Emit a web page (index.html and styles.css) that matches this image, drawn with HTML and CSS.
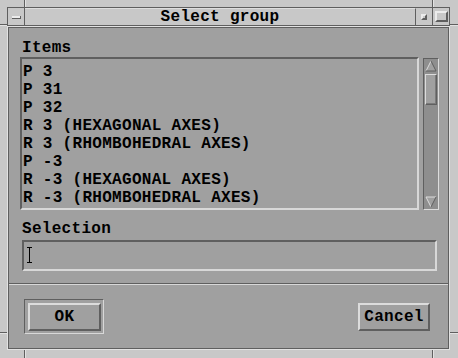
FILE: index.html
```html
<!DOCTYPE html>
<html lang="en">
  <head>
    <meta charset="UTF-8" />
    <title>Select group</title>
    <link rel="stylesheet" href="styles.css">
  </head>
  <body>
    <div class="window">
      <!-- Resize handle grooves -->
      <span class="handle h-top-left"></span>
      <span class="handle h-top-right"></span>
      <span class="handle v-top-left"></span>
      <span class="handle v-top-right"></span>
      <span class="handle h-bottom-left"></span>
      <span class="handle h-bottom-right"></span>
      <span class="handle v-bottom-left"></span>
      <span class="handle v-bottom-right"></span>

      <!-- Title bar -->
      <div class="titlebar">
        <div class="tb-btn menu-btn"><span class="menu-icon"></span></div>
        <div class="title">Select group</div>
        <div class="tb-btn min-btn"><span class="min-icon"></span></div>
        <div class="tb-btn max-btn"><span class="max-icon"></span></div>
      </div>

      <!-- Dialog body -->
      <div class="client">
        <div class="work-area">
          <div class="label">Items</div>
          <div class="list-row">
            <div class="list">
              <div class="item">P 3</div>
              <div class="item">P 31</div>
              <div class="item">P 32</div>
              <div class="item">R 3 (HEXAGONAL AXES)</div>
              <div class="item">R 3 (RHOMBOHEDRAL AXES)</div>
              <div class="item">P -3</div>
              <div class="item">R -3 (HEXAGONAL AXES)</div>
              <div class="item">R -3 (RHOMBOHEDRAL AXES)</div>
            </div>
            <div class="scrollbar">
              <svg class="arrow" width="12" height="12" viewBox="0 0 12 12">
                <polygon points="6,1 11,11 1,11" fill="#a0a0a0" />
                <polyline points="1,11 6,1" fill="none" stroke="#dcdcdc" stroke-width="1" />
                <polyline points="6,1 11,11 1,11" fill="none" stroke="#5f5f5f" stroke-width="1" />
              </svg>
              <div class="trough">
                <div class="thumb"></div>
              </div>
              <svg class="arrow" width="12" height="12" viewBox="0 0 12 12">
                <polygon points="1,1 11,1 6,11" fill="#a0a0a0" />
                <polyline points="6,11 1,1 11,1" fill="none" stroke="#dcdcdc" stroke-width="1" />
                <polyline points="11,1 6,11" fill="none" stroke="#5f5f5f" stroke-width="1" />
              </svg>
            </div>
          </div>
          <div class="label label-selection">Selection</div>
          <div class="field">
            <svg class="caret" width="5" height="16" viewBox="0 0 5 16">
              <path d="M0 0.5h5M0 15.5h5M2.5 0v16" stroke="#000" stroke-width="1" fill="none" />
            </svg>
          </div>
        </div>

        <div class="separator"></div>

        <div class="button-row">
          <div class="default-ring">
            <button class="btn" type="button">OK</button>
          </div>
          <button class="btn btn-cancel" type="button">Cancel</button>
        </div>
      </div>
    </div>
  </body>
</html>
```

FILE: styles.css
```css
/* General Styles */
body {
  margin: 0;
  padding: 0;
  font-family: "Liberation Mono", "DejaVu Sans Mono", monospace;
  font-weight: bold;
  font-size: 16px;
  letter-spacing: 0.3px;
  color: #000;
  background: #c8c8c8;
}

.window {
  position: relative;
  box-sizing: border-box;
  width: 458px;
  height: 358px;
  padding: 7px 8px 8px 7px;
  background-color: #c8c8c8;
  display: flex;
  flex-direction: column;
}

/* Resize handle grooves in the frame */
.handle {
  position: absolute;
  background-color: #5f5f5f;
}

.h-top-left,
.h-top-right,
.h-bottom-left,
.h-bottom-right {
  height: 1px;
  width: 7px;
  box-shadow: 0 1px 0 #e2e2e2;
}

.h-top-left { left: 0; top: 24px; }
.h-top-right { right: 0; top: 24px; width: 8px; }
.h-bottom-left { left: 0; top: 332px; }
.h-bottom-right { right: 0; top: 332px; width: 8px; }

.v-top-left,
.v-top-right,
.v-bottom-left,
.v-bottom-right {
  width: 1px;
  height: 7px;
  box-shadow: 1px 0 0 #e2e2e2;
}

.v-top-left { left: 24px; top: 0; }
.v-top-right { left: 432px; top: 0; }
.v-bottom-left { left: 24px; bottom: 0; height: 8px; }
.v-bottom-right { left: 432px; bottom: 0; height: 8px; }

/* Title bar */
.titlebar {
  box-sizing: border-box;
  height: 19px;
  display: flex;
  border: 1px solid #5f5f5f;
  background-color: #c8c8c8;
}

.tb-btn {
  width: 16px;
  display: flex;
  align-items: center;
  justify-content: center;
}

.menu-btn,
.min-btn {
  border-right: 1px solid #5f5f5f;
}

.title {
  flex: 1;
  text-align: center;
  line-height: 17px;
  border-right: 1px solid #5f5f5f;
  border-top: 1px solid #dedede;
  box-sizing: border-box;
}

.menu-icon {
  width: 8px;
  height: 2px;
  background-color: #ececec;
  border-right: 1px solid #5f5f5f;
  border-bottom: 1px solid #5f5f5f;
  margin-top: 2px;
}

.min-icon {
  box-sizing: border-box;
  width: 6px;
  height: 6px;
  border-top: 2px solid #ececec;
  border-left: 2px solid #ececec;
  border-right: 2px solid #5f5f5f;
  border-bottom: 2px solid #5f5f5f;
}

.max-icon {
  box-sizing: border-box;
  width: 13px;
  height: 11px;
  border-top: 2px solid #ececec;
  border-left: 2px solid #ececec;
  border-right: 2px solid #5f5f5f;
  border-bottom: 2px solid #5f5f5f;
}

/* Dialog client area */
.client {
  flex: 1;
  margin: 1px 1px 1px 1px;
  background-color: #a0a0a0;
  border: 1px solid #5f5f5f;
  box-shadow: 0 0 0 1px #e2e2e2;
  display: flex;
  flex-direction: column;
}

.work-area {
  padding: 11px 9px 0 11px;
}

.label {
  line-height: 18px;
  padding-left: 2px;
}

.label-selection {
  margin-top: 10px;
}

.list-row {
  display: flex;
  gap: 4px;
}

.list {
  flex: 1;
  height: 153px;
  box-sizing: border-box;
  padding: 4px 0 1px 1px;
  border: 2px solid;
  border-color: #5f5f5f #d8d8d8 #d8d8d8 #5f5f5f;
  line-height: 18px;
  overflow: hidden;
}

.item {
  white-space: pre;
}

.scrollbar {
  width: 16px;
  height: 152px;
  box-sizing: border-box;
  margin-top: 1px;
  border: 1px solid;
  border-color: #5f5f5f #dcdcdc #dcdcdc #5f5f5f;
  background-color: #8e8e8e;
  display: flex;
  flex-direction: column;
  align-items: center;
  padding: 1px 0;
}

.arrow {
  display: block;
  background-color: #8e8e8e;
}

.trough {
  flex: 1;
  width: 12px;
  padding-top: 2px;
}

.thumb {
  box-sizing: border-box;
  height: 31px;
  background-color: #a0a0a0;
  border: 1px solid;
  border-color: #dcdcdc #5f5f5f #5f5f5f #dcdcdc;
  box-shadow: inset -1px -1px 0 #7a7a7a;
}

.field {
  box-sizing: border-box;
  height: 31px;
  margin: 2px 2px 0 2px;
  border: 2px solid;
  border-color: #5f5f5f #d8d8d8 #d8d8d8 #5f5f5f;
  padding: 5px 0 0 3px;
}

.caret {
  display: block;
}

.separator {
  margin-top: 12px;
  height: 0;
  border-top: 1px solid #5f5f5f;
  border-bottom: 1px solid #d8d8d8;
}

/* Buttons */
.button-row {
  display: flex;
  justify-content: space-between;
  align-items: flex-start;
  padding: 14px 18px 0 15px;
}

.default-ring {
  padding: 3px 2px 2px 3px;
  border: 1px solid;
  border-color: #5f5f5f #d8d8d8 #d8d8d8 #5f5f5f;
}

.btn {
  display: block;
  box-sizing: border-box;
  width: 73px;
  height: 28px;
  margin: 0;
  padding: 0;
  font-family: inherit;
  font-weight: bold;
  font-size: 16px;
  letter-spacing: 0.3px;
  color: #000;
  background-color: #a0a0a0;
  border: 2px solid;
  border-color: #dcdcdc #5f5f5f #5f5f5f #dcdcdc;
  cursor: pointer;
}

.btn-cancel {
  width: 72px;
  margin-top: 4px;
}
```
